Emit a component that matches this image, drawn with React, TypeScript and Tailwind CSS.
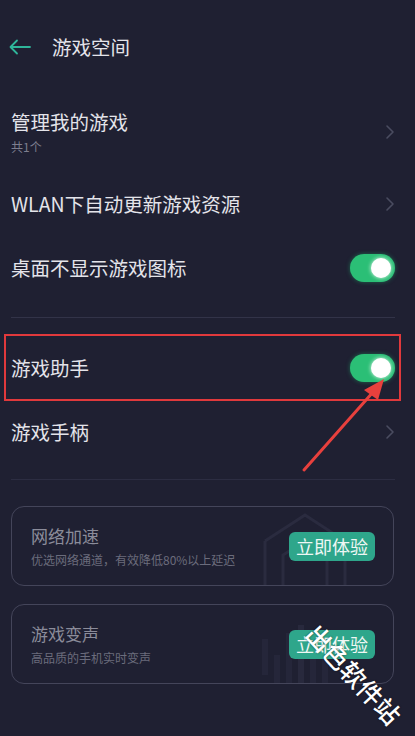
import React from "react";

const font = { fontFamily: '"Noto Sans CJK SC", "Noto Sans", sans-serif' };

function Chevron() {
  return (
    <svg width="10" height="16" viewBox="0 0 10 16" fill="none">
      <path d="M2 2 L8 8 L2 14" stroke="#4a4c60" strokeWidth="1.6" strokeLinecap="round" strokeLinejoin="round" />
    </svg>
  );
}

function Toggle() {
  return (
    <div className="relative w-[45px] h-[28px] rounded-full bg-[#2bbf76] shadow-[0_0_4px_rgba(30,180,110,0.5)]">
      <div className="absolute right-[4px] top-[4px] w-[20px] h-[20px] rounded-full bg-white shadow-[0_0_4px_rgba(255,255,255,0.9)]" />
    </div>
  );
}

function Row({ title, sub, right, h }: { title: string; sub?: string; right: React.ReactNode; h: string }) {
  return (
    <div className={`flex items-center justify-between pl-[11px] pr-[20px] ${h}`}>
      <div className="flex flex-col">
        <span className="text-[19.5px] leading-[26px] text-[#e4e4ea]">{title}</span>
        {sub && <span className="text-[12px] leading-[18px] mt-[3px] text-[#7d7e8e]">{sub}</span>}
      </div>
      {right}
    </div>
  );
}

function HouseDeco() {
  return (
    <svg className="absolute left-[247px] top-[4px]" width="90" height="76" viewBox="0 0 90 76" fill="none">
      <path d="M6 30 L46 4 L86 30 L86 76" stroke="#2a2b3f" strokeWidth="3" />
      <path d="M6 30 L6 76" stroke="#2a2b3f" strokeWidth="3" />
      <path d="M24 76 L24 44 L46 30 L68 44 L68 76" stroke="#2a2b3f" strokeWidth="3" />
    </svg>
  );
}

function BarsDeco() {
  return (
    <div className="absolute left-[250px] top-[14px] h-[66px] flex items-end gap-[6px]">
      <div className="w-[6px] h-[36px] bg-[#25263a] mb-[10px]" />
      <div className="w-[6px] h-[30px] bg-[#25263a]" />
      <div className="w-[6px] h-[52px] bg-[#25263a]" />
      <div className="w-[6px] h-[60px] bg-[#28293d]" />
      <div className="w-[6px] h-[44px] bg-[#25263a]" />
      <div className="w-[6px] h-[34px] bg-[#25263a]" />
    </div>
  );
}

function Card({ title, sub, deco }: { title: string; sub: string; deco: React.ReactNode }) {
  return (
    <div className="relative ml-[11px] mr-[21px] h-[80px] rounded-[13px] border border-[#44455a] overflow-hidden flex items-center justify-between pl-[19px] pr-[18px]">
      {deco}
      <div className="relative flex flex-col">
        <span className="text-[17px] leading-[22px] text-[#8b8c9a]">{title}</span>
        <span className="text-[12px] leading-[16px] mt-[5px] text-[#6b6c7c]">{sub}</span>
      </div>
      <div className="relative w-[86px] h-[29px] rounded-[6px] bg-[#2ea68b] flex items-center justify-center text-[18px] text-[#eef7f4]">
        立即体验
      </div>
    </div>
  );
}

export default function App() {
  return (
    <div className="relative w-[415px] h-[736px] bg-[#1f2032] overflow-hidden" style={font}>
      <div className="h-[94px] flex items-center pl-[9px]">
        <svg width="22" height="16" viewBox="0 0 22 16" fill="none">
          <path d="M21 8 H2 M8 1.5 L1.5 8 L8 14.5" stroke="#2fb59a" strokeWidth="1.8" strokeLinecap="round" strokeLinejoin="round" />
        </svg>
        <span className="ml-[21px] text-[19.5px] text-[#e4e4ea]">游戏空间</span>
      </div>

      <Row h="h-[76px]" title="管理我的游戏" sub="共1个" right={<Chevron />} />
      <div className="h-[2px]" />
      <Row h="h-[64px]" title="WLAN下自动更新游戏资源" right={<Chevron />} />
      <div className="h-[64px] flex items-center justify-between pl-[11px] pr-[20px]">
        <span className="text-[19.5px] text-[#e4e4ea]">桌面不显示游戏图标</span>
        <Toggle />
      </div>

      <div className="mt-[17px] ml-[11px] mr-[20px] h-px bg-[#323348]" />

      <div className="mt-[16px] ml-[4px] mr-[14px] h-[67px] border-2 border-[#e0393c] flex items-center justify-between pl-[5px] pr-[4px]">
        <span className="text-[19.5px] text-[#e4e4ea]">游戏助手</span>
        <Toggle />
      </div>

      <Row h="h-[62px]" title="游戏手柄" right={<Chevron />} />

      <div className="mt-[16px] ml-[11px] mr-[20px] h-px bg-[#2c2d42]" />

      <div className="mt-[26px]">
        <Card title="网络加速" sub="优选网络通道，有效降低80%以上延迟" deco={<HouseDeco />} />
      </div>
      <div className="mt-[18px]">
        <Card title="游戏变声" sub="高品质的手机实时变声" deco={<BarsDeco />} />
      </div>

      <svg className="absolute left-0 top-0 pointer-events-none" width="415" height="736" viewBox="0 0 415 736">
        <line x1="304" y1="470" x2="374" y2="391" stroke="#e8403d" strokeWidth="3" strokeLinecap="round" />
        <path d="M384 379 L364 390 L378 400 Z" fill="#e8403d" />
      </svg>

      <div
        className="absolute left-[354px] top-[674px] text-white text-[25px] font-medium whitespace-nowrap leading-none"
        style={{ transform: "translate(-50%, -50%) rotate(47deg)", textShadow: "0 0 2px rgba(0,0,0,0.6)" }}
      >
        出色软件站
      </div>
    </div>
  );
}
